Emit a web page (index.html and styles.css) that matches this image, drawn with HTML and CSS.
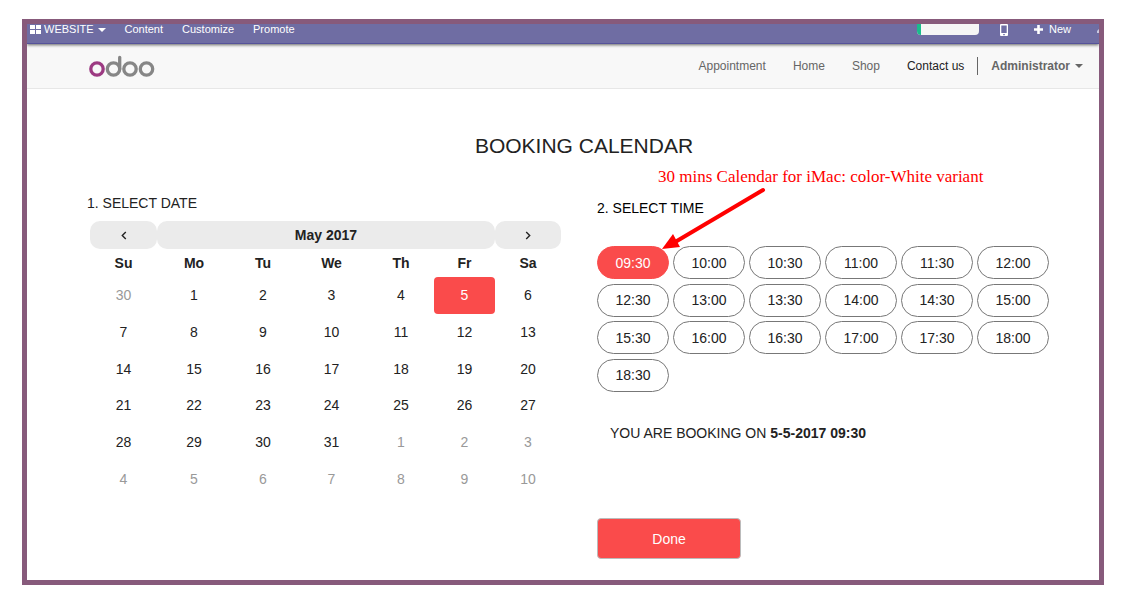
FILE: index.html
```html
<!DOCTYPE html>
<html lang="en">
<head>
<meta charset="utf-8">
<title>Booking Calendar</title>
<link rel="stylesheet" href="styles.css">
</head>
<body>
<div class="frame">
  <div class="topbar">
    <button class="topbar-item brand" type="button">
      <svg width="11" height="9" viewBox="0 0 11 9" fill="currentColor" aria-hidden="true"><path d="M0 0h5v4H0zM6 0h5v4H6zM0 5h5v4H0zM6 5h5v4H6z"/></svg>
      WEBSITE
      <span class="caret"></span>
    </button>
    <a class="topbar-item" href="#">Content</a>
    <a class="topbar-item" href="#">Customize</a>
    <a class="topbar-item" href="#">Promote</a>
    <div class="topbar-right">
      <div class="progress"><div class="progress-fill"></div></div>
      <button class="topbar-item" type="button" aria-label="Mobile preview">
        <svg width="8" height="12" viewBox="0 0 8 12" aria-hidden="true"><path fill="currentColor" fill-rule="evenodd" d="M1 0h6a1 1 0 0 1 1 1v10a1 1 0 0 1-1 1H1a1 1 0 0 1-1-1V1a1 1 0 0 1 1-1zM1.300 1.500v7.500h5.400V1.500zM3.200 10h1.600v1.200H3.200z"/></svg>
      </button>
      <button class="topbar-item new" type="button">
        <svg width="9" height="9" viewBox="0 0 9 9" fill="currentColor" aria-hidden="true"><path d="M3.200 0h2.600v3.200H9v2.600H5.800V9H3.200V5.800H0V3.200h3.200z"/></svg>
        New
      </button>
      <svg class="edge" width="2" height="10" viewBox="0 0 2 10" aria-hidden="true"><path fill="#c9c9e0" d="M0 9V7l2-2v4z"/></svg>
    </div>
  </div>

  <header class="header">
    <a class="logo" href="#" aria-label="odoo">
      <svg width="66" height="24" viewBox="0 0 66 24" fill="none" stroke-width="3.300" aria-hidden="true">
        <circle cx="8" cy="15" r="6.200" stroke="#9c3a82"/>
        <g stroke="#868686">
          <circle cx="24.500" cy="15" r="6.200"/>
          <path d="M30.700 15V3.500" stroke-linecap="round"/>
          <circle cx="41" cy="15" r="6.200"/>
          <circle cx="57.500" cy="15" r="6.200"/>
        </g>
      </svg>
    </a>
    <nav class="nav">
      <a href="#">Appointment</a>
      <a href="#">Home</a>
      <a href="#">Shop</a>
      <a class="active" href="#">Contact us</a>
      <button class="user" type="button">Administrator <span class="caret"></span></button>
    </nav>
  </header>

  <main class="main">
    <h1>BOOKING CALENDAR</h1>
    <div class="columns">
      <section class="date">
        <h2>1. SELECT DATE</h2>
        <table class="calendar">
          <colgroup><col class="c67"><col class="c74"><col class="c64"><col class="c73"><col class="c66"><col class="c61"><col class="c66"></colgroup>
          <thead>
            <tr class="month">
              <th><button type="button" aria-label="Previous month"><svg width="6" height="9" viewBox="0 0 6 9" aria-hidden="true"><path d="M4.800 1 1.300 4.500 4.800 8"/></svg></button></th>
              <th colspan="5">May 2017</th>
              <th><button type="button" aria-label="Next month"><svg width="6" height="9" viewBox="0 0 6 9" aria-hidden="true"><path d="M1.200 1 4.700 4.500 1.200 8"/></svg></button></th>
            </tr>
            <tr class="days"><th>Su</th><th>Mo</th><th>Tu</th><th>We</th><th>Th</th><th>Fr</th><th>Sa</th></tr>
          </thead>
          <tbody>
            <tr><td class="other"><button type="button">30</button></td><td><button type="button">1</button></td><td><button type="button">2</button></td><td><button type="button">3</button></td><td><button type="button">4</button></td><td class="selected"><button type="button">5</button></td><td><button type="button">6</button></td></tr>
            <tr><td><button type="button">7</button></td><td><button type="button">8</button></td><td><button type="button">9</button></td><td><button type="button">10</button></td><td><button type="button">11</button></td><td><button type="button">12</button></td><td><button type="button">13</button></td></tr>
            <tr><td><button type="button">14</button></td><td><button type="button">15</button></td><td><button type="button">16</button></td><td><button type="button">17</button></td><td><button type="button">18</button></td><td><button type="button">19</button></td><td><button type="button">20</button></td></tr>
            <tr><td><button type="button">21</button></td><td><button type="button">22</button></td><td><button type="button">23</button></td><td><button type="button">24</button></td><td><button type="button">25</button></td><td><button type="button">26</button></td><td><button type="button">27</button></td></tr>
            <tr><td><button type="button">28</button></td><td><button type="button">29</button></td><td><button type="button">30</button></td><td><button type="button">31</button></td><td class="other"><button type="button">1</button></td><td class="other"><button type="button">2</button></td><td class="other"><button type="button">3</button></td></tr>
            <tr class="other"><td><button type="button">4</button></td><td><button type="button">5</button></td><td><button type="button">6</button></td><td><button type="button">7</button></td><td><button type="button">8</button></td><td><button type="button">9</button></td><td><button type="button">10</button></td></tr>
          </tbody>
        </table>
      </section>

      <section class="time">
        <div class="note">
          <p>30 mins Calendar for iMac: color-White variant</p>
          <svg width="104" height="62" viewBox="0 0 104 62" aria-hidden="true"><path d="M100 2 13 53.500" stroke="#f00" stroke-width="4" stroke-linecap="round"/><path d="M-1 61 10 46 17 59z" fill="#f00"/></svg>
        </div>
        <h2>2. SELECT TIME</h2>
        <div class="slots">
          <button class="chosen" type="button">09:30</button><button type="button">10:00</button><button type="button">10:30</button><button type="button">11:00</button><button type="button">11:30</button><button type="button">12:00</button>
          <button type="button">12:30</button><button type="button">13:00</button><button type="button">13:30</button><button type="button">14:00</button><button type="button">14:30</button><button type="button">15:00</button>
          <button type="button">15:30</button><button type="button">16:00</button><button type="button">16:30</button><button type="button">17:00</button><button type="button">17:30</button><button type="button">18:00</button>
          <button type="button">18:30</button>
        </div>
        <p class="summary">YOU ARE BOOKING ON <strong>5-5-2017 09:30</strong></p>
        <button class="done" type="button">Done</button>
      </section>
    </div>
  </main>
</div>
</body>
</html>
```
FILE: styles.css
```css
* { box-sizing: border-box; }

body {
  margin: 0;
  padding: 19px 22px 22px;
  background: #fff;
  color: #222;
  font: 14px/20px "Liberation Sans", Arial, sans-serif;
}

h1, h2, p { margin: 0; font-weight: normal; }
a { color: inherit; text-decoration: none; }
button {
  margin: 0;
  padding: 0;
  border: 0;
  background: none;
  color: inherit;
  font: inherit;
  cursor: pointer;
}
svg { display: block; flex: none; }

.frame { border: 5px solid #875a7b; overflow: hidden; }

.caret {
  border: 4px solid transparent;
  border-top-color: currentColor;
  border-bottom: 0;
}

.topbar {
  display: flex;
  align-items: flex-start;
  gap: 19px;
  height: 20px;
  padding-left: 3px;
  border-bottom: 1px solid #56539a;
  background: #6f6da3;
  box-shadow: 0 1px 3px rgba(0, 0, 0, 0.6);
  color: #fff;
  font-size: 11px;
  line-height: 11px;
  position: relative;
}
.topbar-item { display: flex; align-items: center; }
.brand { gap: 3px; }
.brand .caret { margin-left: 1px; }
.topbar-right { display: flex; align-items: flex-start; margin-left: auto; }
.progress {
  width: 62px;
  height: 11px;
  margin-right: 21px;
  overflow: hidden;
  border-radius: 0 0 4px 4px;
  background: #f5f5f5;
}
.progress-fill { width: 4px; height: 100%; background: #1abc8c; }
.new { gap: 6px; margin-left: 26px; }
.edge { margin-left: 26px; }

.header {
  display: flex;
  align-items: center;
  justify-content: space-between;
  height: 45px;
  padding: 0 16px 0 62px;
  border-bottom: 1px solid #e7e7e7;
  background: #f8f8f8;
}
.nav {
  display: flex;
  align-items: center;
  gap: 27px;
  color: #666;
  font-size: 12px;
  line-height: 18px;
}
.nav .active { color: #222; }
.user {
  display: flex;
  align-items: center;
  gap: 5px;
  margin-left: -14px;
  padding-left: 13px;
  border-left: 1px solid #666;
  font-weight: bold;
}

.main { padding: 44px 18px 21px 60px; }
h1 { font-size: 21px; line-height: 26px; text-align: center; }
h2 { font-size: 14px; line-height: 20px; }
.columns {
  display: grid;
  grid-template-columns: 510fr 484fr;
  padding-top: 34px;
}

.calendar {
  width: 471px;
  height: 276px;
  margin: 8px 0 0 3px;
  border-collapse: collapse;
  table-layout: fixed;
  text-align: center;
}
.c61 { width: 61px; }
.c64 { width: 64px; }
.c66 { width: 66px; }
.c67 { width: 67px; }
.c73 { width: 73px; }
.c74 { width: 74px; }
.calendar th, .calendar td { padding: 0; vertical-align: middle; }
.month, .days { height: 28px; }
.month th { border-radius: 10px; background: #ebebeb; }
.calendar button { display: block; width: 100%; }
.month button { height: 26px; }
.month svg {
  margin: 0 auto;
  fill: none;
  stroke: #222;
  stroke-width: 1.4px;
}
.calendar td button { height: 36px; }
.other { color: #999; }
.selected { border-radius: 4px; background: #fa4b4b; color: #fff; }

.time { position: relative; padding-top: 5px; }
.time h2 { color: #000; }
.note {
  position: absolute;
  top: -27px;
  left: 61px;
  color: #f00;
  font: 17px/22px "Liberation Serif", "Times New Roman", serif;
  white-space: nowrap;
  pointer-events: none;
}
.note svg { margin-left: 5px; overflow: visible; }

.slots {
  display: flex;
  flex-wrap: wrap;
  align-content: space-between;
  column-gap: 4px;
  min-height: 146px;
  margin-top: 28px;
}
.slots button {
  width: 72px;
  height: 33px;
  border: 1px solid #777;
  border-radius: 17px;
}
.slots .chosen { border-color: #fa4b4b; background: #fa4b4b; color: #fff; }
.summary { margin-top: 31px; padding-left: 13px; }
.done {
  display: block;
  width: 144px;
  height: 41px;
  margin-top: 75px;
  border: 1px solid #bbb;
  border-radius: 4px;
  background: #fa4b4b;
  color: #fff;
}
```
